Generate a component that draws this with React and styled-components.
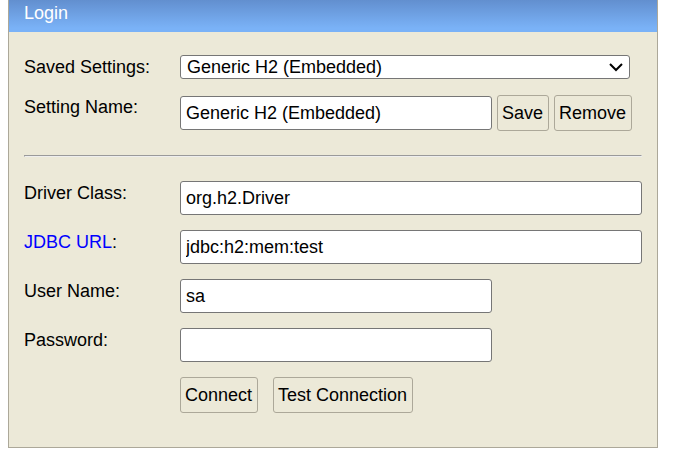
import React from "react";
import styled, { createGlobalStyle } from "styled-components";

const GlobalStyle = createGlobalStyle`
  *, *::before, *::after { box-sizing: border-box; }
  body {
    margin: 0 21px 0 8px;
    background: #ffffff;
    color: #000000;
    font: 18px/22px "Liberation Sans", Arial, sans-serif;
  }
`;

const Panel = styled.form`
  border: 1px solid #aca899;
  border-top: 0;
  background: #ece9d8;
`;

const Title = styled.h1`
  margin: 0;
  padding: 2px 15px 8px;
  background: linear-gradient(#628fcf, #7ab2f7 88%);
  color: #ffffff;
  font: inherit;
`;

const Section = styled.div`
  display: grid;
  gap: ${(p) => p.$gap};
`;

const Content = styled.div`
  padding: 23px 15px 34px;
`;

const Row = styled.div`
  display: grid;
  grid-template-columns: 156px minmax(0, 1fr);
  align-items: start;
`;

const LabelText = styled.label`
  padding-top: 1px;
`;

const HelpLink = styled.a`
  color: #0000ff;
  text-decoration: none;
`;

const Controls = styled.div`
  display: flex;
  align-items: center;
  gap: ${(p) => p.$gap || "5px"};
  grid-column: 2;
`;

const TextInput = styled.input`
  width: ${(p) => (p.$wide ? "100%" : "312px")};
  max-width: 100%;
  min-width: 0;
  height: 34px;
  padding: 0 5px;
  border: 1px solid #767676;
  border-radius: 3px;
  background: #ffffff;
  color: inherit;
  font: inherit;
`;

const SelectBox = styled.div`
  position: relative;
  width: 450px;
  max-width: 100%;
`;

const Select = styled.select`
  display: block;
  width: 100%;
  height: 24px;
  padding: 0 30px 0 6px;
  border: 1px solid #767676;
  border-radius: 3px;
  background: #ffffff;
  color: inherit;
  font: inherit;
  appearance: none;
`;

const Chevron = styled.svg`
  position: absolute;
  top: 8px;
  right: 7px;
  pointer-events: none;
`;

const Button = styled.button`
  flex: none;
  height: 36px;
  padding: 0 5px 0 4px;
  border: 1px solid #aca899;
  border-radius: 3px;
  background: #ece9d8;
  color: inherit;
  font: inherit;
`;

const Divider = styled.hr`
  height: 2px;
  margin: 24px 0;
  border: 1px solid;
  border-color: #9a9a9a #eeeeee #eeeeee #9a9a9a;
`;

function Field({ id, label, help, type = "text", value = "", wide }) {
  return (
    <Row>
      <LabelText htmlFor={id}>
        {help ? <HelpLink href="#jdbc-url">{label}</HelpLink> : label}:
      </LabelText>
      <TextInput id={id} type={type} defaultValue={value} $wide={wide} />
    </Row>
  );
}

export default function App() {
  return (
    <>
      <GlobalStyle />
      <Panel onSubmit={(e) => e.preventDefault()}>
        <Title>Login</Title>
        <Content>
          <Section $gap="16px">
            <Row>
              <LabelText htmlFor="setting">Saved Settings:</LabelText>
              <SelectBox>
                <Select id="setting">
                  <option>Generic H2 (Embedded)</option>
                </Select>
                <Chevron width="14" height="9" viewBox="0 0 14 9" aria-hidden="true">
                  <path d="M1 1L7 7L13 1" fill="none" stroke="#000000" strokeWidth="2" />
                </Chevron>
              </SelectBox>
            </Row>
            <Row>
              <LabelText htmlFor="name">Setting Name:</LabelText>
              <Controls>
                <TextInput id="name" type="text" defaultValue="Generic H2 (Embedded)" />
                <Button type="button">Save</Button>
                <Button type="button">Remove</Button>
              </Controls>
            </Row>
          </Section>
          <Divider />
          <Section $gap="15px">
            <Field id="driver" label="Driver Class" value="org.h2.Driver" wide />
            <Field id="url" label="JDBC URL" value="jdbc:h2:mem:test" wide help />
            <Field id="user" label="User Name" value="sa" />
            <Field id="password" label="Password" type="password" />
            <Row>
              <Controls $gap="15px">
                <Button type="submit">Connect</Button>
                <Button type="button">Test Connection</Button>
              </Controls>
            </Row>
          </Section>
        </Content>
      </Panel>
    </>
  );
}
